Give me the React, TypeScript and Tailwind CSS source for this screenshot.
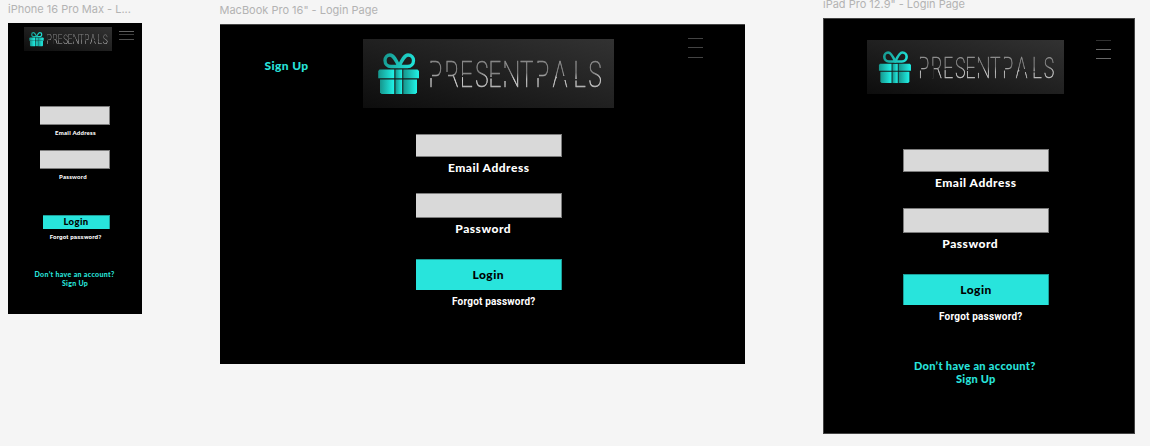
import React from "react";

const WORD_X = "95.6 119.1 141.9 164.1 183.8 204.4 229.7 252.9 278.4 308.8 330.4";

function Logo({ id, className }: { id: string; className: string }) {
  const teal = `url(#${id}-teal)`;
  return (
    <svg viewBox="0 0 251 69" preserveAspectRatio="none" className={className} role="img" aria-label="PresentPals">
      <defs>
        <linearGradient id={`${id}-bg`} x1="0" y1="1" x2="1" y2="0">
          <stop offset="0" stopColor="#0d0d0d" />
          <stop offset="0.5" stopColor="#202020" />
          <stop offset="1" stopColor="#323232" />
        </linearGradient>
        <linearGradient id={`${id}-teal`} x1="0" y1="0" x2="1" y2="0">
          <stop offset="0" stopColor="#16958c" />
          <stop offset="1" stopColor="#20f3e8" />
        </linearGradient>
        <linearGradient id={`${id}-bow`} gradientUnits="userSpaceOnUse" x1="20" y1="16" x2="52" y2="28">
          <stop offset="0" stopColor="#16958c" />
          <stop offset="1" stopColor="#20e8de" />
        </linearGradient>
        <linearGradient id={`${id}-silver`} gradientUnits="userSpaceOnUse" x1="0" y1="22" x2="0" y2="48">
          <stop offset="0" stopColor="#8c8c8c" />
          <stop offset="0.45" stopColor="#808080" />
          <stop offset="0.7" stopColor="#d0d0d0" />
          <stop offset="1" stopColor="#b8b8b8" />
        </linearGradient>
        <mask id={`${id}-gaps`} maskUnits="userSpaceOnUse" x="60" y="15" width="185" height="40">
          <rect x="60" y="15" width="185" height="40" fill="white" />
          <rect x="66" y="24" width="3" height="15" fill="black" />
          <rect x="82" y="33" width="3" height="16" fill="black" />
          <rect x="97" y="36.5" width="4" height="1.5" fill="black" />
          <rect x="126" y="38" width="4" height="1.5" fill="black" />
          <rect x="140" y="29" width="3" height="13" fill="black" />
          <rect x="173" y="24" width="3" height="15" fill="black" />
          <rect x="194" y="37" width="9" height="4" fill="black" />
          <rect x="211" y="40" width="3" height="1.5" fill="black" />
        </mask>
      </defs>
      <rect width="251" height="69" fill={`url(#${id}-bg)`} />
      <g fill="none" stroke={`url(#${id}-bow)`} strokeWidth="3.3" strokeLinejoin="round">
        <path d="M36 27.5C33 21 30.500 16 27 16C24 16 22 18.500 22 21.500C22 25 24.500 27.500 28 27.500Z" />
        <path d="M36 27.5C39 21 41.500 16 45 16C48.500 16 50.500 18.500 50.500 21.500C50.500 25 48 27.500 44.500 27.500Z" />
      </g>
      <path d="M16.500 30.500H31.300V39.300H15.200V32Z" fill={teal} />
      <path d="M40.300 30.500H54.500L56 32V39.300H40.300Z" fill={teal} />
      <rect x="32.400" y="30.500" width="6.800" height="8.800" fill={teal} />
      <path d="M17 40.500H31.300V55H18.500L17 53.500Z" fill={teal} />
      <path d="M40.300 40.500H54V53.500L52.500 55H40.300Z" fill={teal} />
      <rect x="32.400" y="40.500" width="6.800" height="14.500" fill={teal} />
      <g mask={`url(#${id}-gaps)`}>
        <text
          x={WORD_X}
          y="48"
          transform="scale(0.68 1)"
          fill={`url(#${id}-silver)`}
          stroke={`url(#${id}-silver)`}
          strokeWidth="0.7"
          className="font-['Inter'] text-[35.7px] font-thin"
        >
          PRESENTPALS
        </text>
      </g>
    </svg>
  );
}

function Line({ className, children }: { className: string; children: React.ReactNode }) {
  return <div className={`flex items-center justify-center whitespace-nowrap ${className}`}>{children}</div>;
}

const geo = "font-['Lato',sans-serif] font-black";
const grot = "font-['Roboto',sans-serif] font-bold";
const title = "font-['Inter',sans-serif] whitespace-nowrap text-[#b3b3b3]";
const field = "border-y border-r border-[#7d7d7d] bg-[#d9d9d9]";
const button = "border-t border-r border-[#1c9f99] bg-[#28e4dc] text-black";

export default function App() {
  return (
    <div className="flex h-[446px] w-[1150px] items-start overflow-hidden bg-[#f5f5f5]">
      <section className="ml-2 w-[134px]">
        <h2 className={`${title} flex h-[23px] items-start pt-[2px] text-[11px] leading-[14px]`}>iPhone 16 Pro Max - L...</h2>
        <div className="flex h-[291px] flex-col items-start bg-black">
          <header className="flex items-start pt-1 pl-4">
            <Logo id="phone" className="block h-6 w-[88px]" />
            <div className="mt-1 ml-[7px] flex w-[15px] flex-col">
              <i className="h-px bg-[#626262]" />
              <i className="mt-[2px] h-px bg-[#3e3e3e]" />
              <i className="mt-1 h-px bg-[#4e4e4e]" />
            </div>
          </header>
          <div className="mt-[55px] ml-8 h-[19px] w-[70px] border-y border-r border-[#7d7d7d] bg-[#d9d9d9]" />
          <Line className={`${geo} mt-[2px] ml-[33px] h-[10px] w-[69px] text-[6px] tracking-[0.25px] text-white`}>Email Address</Line>
          <div className="mt-[13px] ml-8 h-[19px] w-[70px] border-y border-r border-[#7d7d7d] bg-[#d9d9d9]" />
          <Line className={`${geo} mt-[2px] ml-[30.500px] h-[10px] w-[69px] text-[6px] tracking-[0.25px] text-white`}>Password</Line>
          <Line className={`${geo} mt-[34px] ml-[35px] h-[14px] w-[67px] ${button} text-[9.500px] tracking-[0.4px]`}>Login</Line>
          <Line className={`${grot} mt-[4px] ml-[34px] h-[10px] w-[67px] text-[6.200px] tracking-[0.13px] text-white`}>Forgot password?</Line>
          <Line className={`${geo} mt-[27px] h-[9px] w-[133px] text-[7px] tracking-[0.33px] text-[#28e4dc]`}>Don’t have an account?</Line>
          <Line className={`${geo} h-[9px] w-[134px] text-[7px] tracking-[0.3px] text-[#28e4dc]`}>Sign Up</Line>
        </div>
      </section>

      <section className="ml-[77.500px] w-[525.500px]">
        <h2 className={`${title} flex h-6 items-start pt-[3px] text-[11px] leading-[14px]`}>MacBook Pro 16&quot; - Login Page</h2>
        <div className="flex h-[340px] flex-col items-start border-t border-[#444] bg-black">
          <header className="flex h-[109px] items-start">
            <Line className={`${geo} mt-[33px] ml-[45px] h-4 w-[44px] text-[12px] tracking-[0.4px] text-[#28e4dc]`}>Sign Up</Line>
            <Logo id="mac" className="mt-[14px] ml-[54.500px] block h-[69px] w-[251px]" />
            <div className="mt-[13px] ml-[74px] flex w-[15px] flex-col">
              <i className="h-px bg-[#444]" />
              <i className="mt-2 h-px bg-[#444]" />
              <i className="mt-[9px] h-px bg-[#444]" />
            </div>
          </header>
          <div className={`ml-[196.500px] h-[23px] w-[145.500px] ${field}`} />
          <Line className={`${geo} mt-[3px] ml-[196.500px] h-4 w-[145.500px] text-[12px] tracking-[0.5px] text-white`}>Email Address</Line>
          <div className={`mt-[17px] ml-[196.500px] h-[25px] w-[145.500px] ${field}`} />
          <Line className={`${geo} mt-[3px] ml-[191px] h-4 w-[145.500px] text-[12px] tracking-[0.5px] text-white`}>Password</Line>
          <Line className={`${geo} mt-[22px] ml-[196.500px] h-[31px] w-[145.500px] ${button} text-[12px] tracking-[0.5px]`}>Login</Line>
          <Line className={`${grot} mt-[3px] ml-[201.500px] h-4 w-[145.500px] text-[10px] tracking-[0.2px] text-white`}>Forgot password?</Line>
        </div>
      </section>

      <section className="ml-[78px] w-[312px]">
        <h2 className={`${title} -mt-[3px] flex h-[21px] items-start text-[11px] leading-[14px]`}>iPad Pro 12.9&quot; - Login Page</h2>
        <div className="flex h-[416px] flex-col items-start border border-[#444] bg-black">
          <header className="flex h-[130px] items-start">
            <Logo id="pad" className="mt-[21px] ml-[43px] block h-[54px] w-[197px]" />
            <div className="mt-[21px] ml-[32px] flex w-[15px] flex-col">
              <i className="h-px bg-[#303030]" />
              <i className="mt-2 h-px bg-[#686868]" />
              <i className="mt-2 h-px bg-[#686868]" />
            </div>
          </header>
          <div className={`ml-[79px] h-[23px] w-[146px] border-l ${field}`} />
          <Line className={`${geo} mt-[3px] ml-[79px] h-4 w-[145.500px] text-[12px] tracking-[0.5px] text-white`}>Email Address</Line>
          <div className={`mt-[17px] ml-[79px] h-[25px] w-[146px] border-l ${field}`} />
          <Line className={`${geo} mt-[3px] ml-[73.500px] h-4 w-[145.500px] text-[12px] tracking-[0.5px] text-white`}>Password</Line>
          <Line className={`${geo} mt-[22px] ml-[79px] h-[31px] w-[146px] border-l ${button} text-[12px] tracking-[0.5px]`}>Login</Line>
          <Line className={`${grot} mt-[3px] ml-[84px] h-4 w-[145.500px] text-[10px] tracking-[0.2px] text-white`}>Forgot password?</Line>
          <Line className={`${geo} mt-[36px] ml-[78px] h-[13px] w-[145.500px] text-[11px] tracking-[0.33px] text-[#28e4dc]`}>Don’t have an account?</Line>
          <Line className={`${geo} ml-[79px] h-[13px] w-[145.500px] text-[11px] tracking-[0.2px] text-[#28e4dc]`}>Sign Up</Line>
        </div>
      </section>
    </div>
  );
}
